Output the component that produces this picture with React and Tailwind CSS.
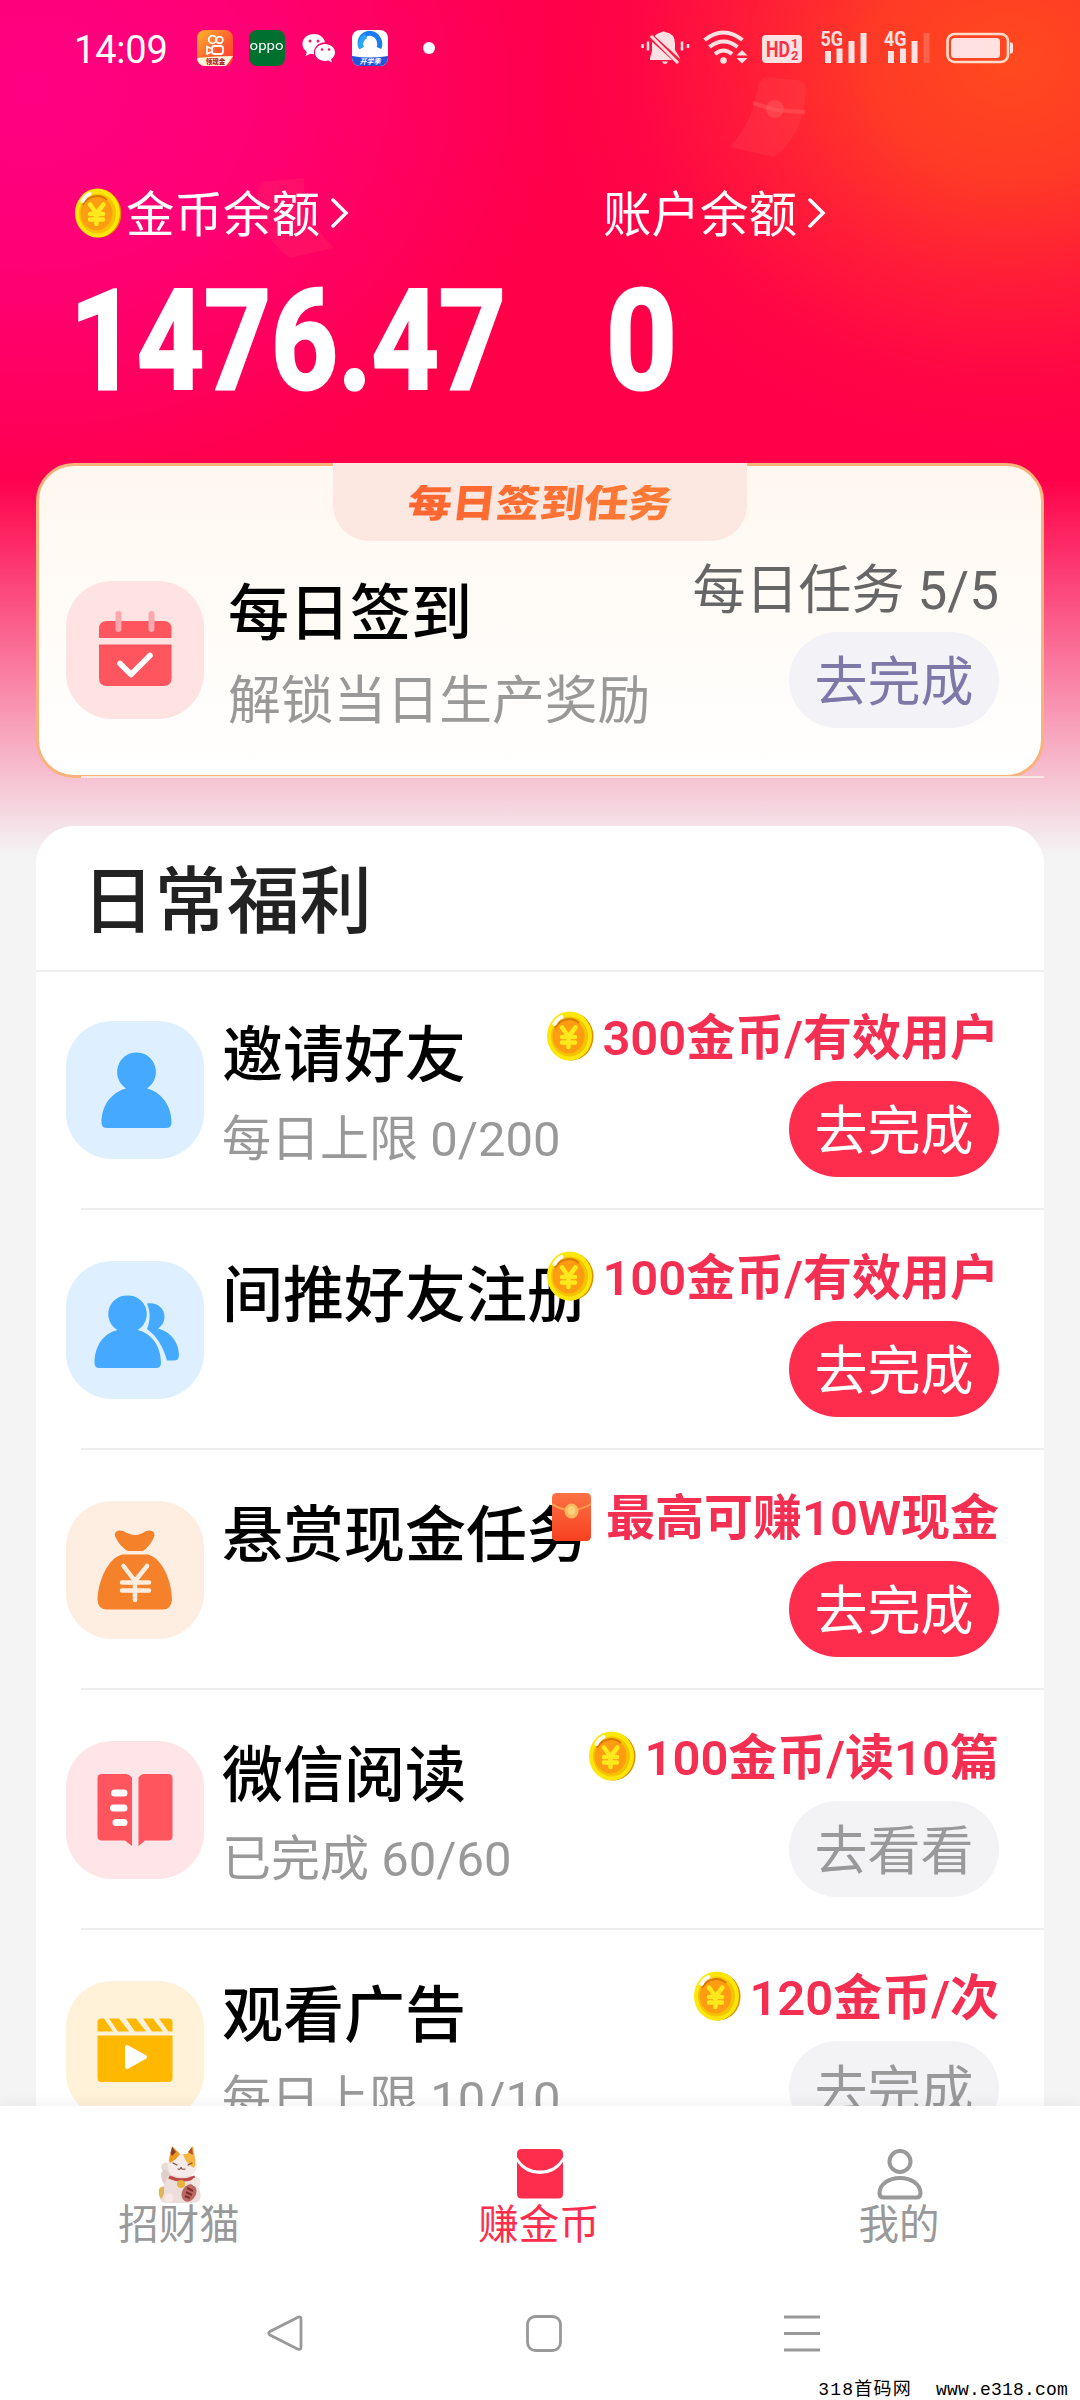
import React from 'react';

function Coin({ className }) {
    return (
        <svg viewBox="0 0 48 50" className={className}>
            <ellipse cx="25" cy="25.5" rx="22.5" ry="24" fill="#e08a00" />
            <ellipse cx="23.5" cy="25" rx="22.5" ry="24.5" fill="#ffe60a" />
            <ellipse cx="23.5" cy="25.5" rx="18.5" ry="20" fill="#f5c400" />
            <ellipse cx="22.5" cy="25" rx="16" ry="17.5" fill="#ff9c12" />
            <path d="M9 17A16 17.5 0 0 1 33 12" fill="none" stroke="#d97a00" strokeWidth="2" />
            <path d="M16 16.5l6.5 9 7-9M22.5 25.5V36M16 26h13M16 31.5h13" fill="none" stroke="#ffe81c" strokeWidth="4.500" strokeLinecap="round" strokeLinejoin="round" />
            <path d="M8.500 13q3-5.500 7-7" fill="none" stroke="#fff" strokeWidth="4" strokeLinecap="round" />
        </svg>
    );
}

function RedPacket({ className }) {
    return (
        <svg viewBox="0 0 40 48" className={className}>
            <defs>
                <linearGradient id="packet" x1="0" y1="0" x2="0" y2="1">
                    <stop offset="0" stopColor="#fb7245" />
                    <stop offset="1" stopColor="#f8401f" />
                </linearGradient>
            </defs>
            <rect width="39" height="48" rx="4.500" fill="url(#packet)" />
            <path d="M0 11q19 12 39 0" fill="none" stroke="#f9a04c" strokeWidth="2" />
            <ellipse cx="19.500" cy="18" rx="7" ry="7.500" fill="#f9b65c" />
            <ellipse cx="19.500" cy="17.500" rx="4" ry="4.500" fill="#fbd07c" />
        </svg>
    );
}

function CalendarIcon() {
    return (
        <>
            <path d="M33 57v-9q0-8 8-8h56.500q8 0 8 8v9zM33 63.500h72.500V97q0 8-8 8H41q-8 0-8-8z" fill="#ff555e" />
            <path d="M52.500 33v15M85.500 33v15" stroke="#ffa7ae" strokeWidth="6" strokeLinecap="round" />
            <path d="M54 82.500l11 11L84 74.500" fill="none" stroke="#fff" strokeWidth="5.500" strokeLinecap="round" strokeLinejoin="round" />
        </>
    );
}

function UserIcon() {
    return (
        <path d="M70.500 31.500a19 19.500 0 0 1 10.500 36C95 71 105.500 84 105.500 101.500q0 5.500-5.500 5.500H41q-5.500 0-5.500-5.500C35.500 84 46 71 60 67.500a19 19.500 0 0 1 10.500-36z" fill="#45aaff" />
    );
}

function UsersIcon() {
    return (
        <g fill="#45aaff">
            <path d="M61.500 34.500a18.500 18.500 0 0 1 10 34.500C85 72 95 84.500 95 102q0 5-5 5H33.500q-5 0-5-5C28.500 84.500 38 72 51.500 69a18.500 18.500 0 0 1 10-34.500z" />
            <path d="M81 42.500c9.500-2 17.500 4.500 17.500 13 0 5.500-2.500 9.500-6.500 12C104 70.500 113 81 113 94q0 5.500-5 5.500h-7C97 85 91 75.500 81 68c3.500-9 3.500-17 0-25.500z" />
        </g>
    );
}

function MoneyBagIcon() {
    return (
        <>
            <path d="M50 37c-3.500-6 2-9.500 8-6.500 4 2 7 3.500 11 3.500s7-1.500 10-3.500c6-3 12 .5 8.500 6.500-2 5-5.500 9-9 12-1 1-3 1-4 1H64c-1 0-3 0-4-1-4-3-8-7-10-12zM56 53.500h26C96 57 106 80 106 99q-1 9.500-9 9.500H41q-9 0-9.500-9.500C32 80 42 57 56 53.500z" fill="#f5812a" />
            <path d="M57.500 65L69 80l12-15M69 80v19M56 81.500h27M56 89.500h27" fill="none" stroke="#ffeee0" strokeWidth="4.500" strokeLinecap="round" />
        </>
    );
}

function BookIcon() {
    return (
        <>
            <path d="M36 33h24q3 0 6 3.500V105l-7-5.500H36q-4.500 0-4.500-4V37q0-4 4.500-4zM78 33h24q4.500 0 4.500 4v58.500q0 4-4.500 4H79l-6.500 5.500V36.500q2.500-3.500 5.500-3.500z" fill="#ff555e" />
            <path d="M48.500 52h9.500M47.500 67H58M50 81.500h8" stroke="#fff" strokeWidth="7" strokeLinecap="round" />
        </>
    );
}

function ClapperIcon() {
    return (
        <>
            <path d="M31.500 50.500V41q0-3.500 3.500-3.500h3l9 13zM43 37.500h10l10 13H52zM60 37.500h10l10 13H69zM77 37.500h10l10 13H86zM93 37.500h10q3.500 0 3.500 3.500v9.500h-4zM31.500 54.500h75V97q0 4-4 4h-67q-4 0-4-4z" fill="#ffb800" />
            <path d="M61 66l18 10-18 10z" fill="#fff" stroke="#fff" strokeWidth="4" strokeLinejoin="round" />
        </>
    );
}

function Tile({ bg, children }) {
    return (
        <div className={`h-[138px] w-[138px] shrink-0 rounded-[46px] ${bg}`}>
            <svg viewBox="0 0 138 138" className="h-full w-full">{children}</svg>
        </div>
    );
}

function ActionButton({ tone, children }) {
    return (
        <button className={`flex h-24 w-[210px] items-center justify-center rounded-full text-[53px] leading-none ${tone}`}>
            <span className="mt-[6px]">{children}</span>
        </button>
    );
}

const primary = 'bg-[#fe2c4d] text-white';
const muted = 'bg-[#f3f3f6] text-[#999]';

const tasks = [
    { title: '邀请好友', sub: '每日上限 0/200', reward: '300金币/有效用户', action: '去完成', tone: primary, bg: 'bg-[#def0ff]', Icon: UserIcon },
    { title: '间推好友注册', reward: '100金币/有效用户', action: '去完成', tone: primary, bg: 'bg-[#def0ff]', Icon: UsersIcon },
    { title: '悬赏现金任务', reward: '最高可赚10W现金', packet: true, action: '去完成', tone: primary, bg: 'bg-[#feeee1]', Icon: MoneyBagIcon },
    { title: '微信阅读', sub: '已完成 60/60', reward: '100金币/读10篇', action: '去看看', tone: muted, bg: 'bg-[#ffe5e7]', Icon: BookIcon },
    { title: '观看广告', sub: '每日上限 10/10', reward: '120金币/次', action: '去完成', tone: muted, bg: 'bg-[#fff2d8]', Icon: ClapperIcon },
];

function TaskRow({ task, first }) {
    return (
        <div className="relative flex h-[240px] pr-[45px] pl-[30px]">
            <div className={`absolute right-0 h-0.5 bg-[#eee] ${first ? 'top-0 left-0' : '-top-0.5 left-[45px]'}`} />
            <div className="pt-[51px]">
                <Tile bg={task.bg}><task.Icon /></Tile>
            </div>
            <div className="ml-[18px] w-0 grow pt-[56px] whitespace-nowrap">
                <div className="h-[60px] text-[61px] leading-[60px] font-medium text-black">{task.title}</div>
                <div className="mt-[30px] h-12 text-[49px] leading-[48px] text-[#999]">{task.sub}</div>
            </div>
            <div className="relative flex flex-col items-end pt-[44px]">
                <div className="flex h-12 items-center text-[49px] leading-[48px] font-semibold whitespace-nowrap text-[#f52f52]">
                    {task.packet
                        ? <RedPacket className="-mt-0.5 mr-3.5 h-12 w-10" />
                        : <Coin className="-mt-1 mr-2 h-[50px] w-12" />}
                    <span className="mt-[2px]">{task.reward}</span>
                </div>
                <div className="mt-[19px]">
                    <ActionButton tone={task.tone}>{task.action}</ActionButton>
                </div>
            </div>
        </div>
    );
}

function AppIcons() {
    return (
        <div className="ml-[30px] flex items-center">
            {/* Kuaishou */}
            <svg viewBox="0 0 36 36" className="h-9 w-9">
                <defs>
                    <linearGradient id="ks" x1="0" y1="0" x2="1" y2="1">
                        <stop offset="0" stopColor="#ffb52e" />
                        <stop offset=".6" stopColor="#ff5a30" />
                        <stop offset="1" stopColor="#ff3b30" />
                    </linearGradient>
                    <clipPath id="round"><rect width="36" height="36" rx="8" /></clipPath>
                </defs>
                <g clipPath="url(#round)">
                    <rect width="36" height="36" fill="url(#ks)" />
                    <path d="M0 28q18-2 36-2-3 5-7 10H0z" fill="#fff3d6" />
                </g>
                <g fill="none" stroke="#fff" strokeWidth="1.800">
                    <circle cx="15.500" cy="9.500" r="3.800" />
                    <circle cx="22.500" cy="10" r="3.300" />
                    <rect x="15" y="16" width="11" height="8" rx="2.500" />
                    <path d="M14 18.500l-4-2v7.500l4-2" strokeLinejoin="round" />
                </g>
                <text x="18.500" y="34" fontSize="6.500" fontWeight="900" textAnchor="middle" fill="#b3241a">领现金</text>
            </svg>
            <div className="ml-4 flex h-9 w-9 items-center justify-center rounded-[8px] bg-[#00702f]">
                <span className="-mt-1 scale-x-125 text-[12px] leading-none text-white">oppo</span>
            </div>
            {/* WeChat */}
            <svg viewBox="0 0 34 30" className="ml-[17px] h-[30px] w-[34px]">
                <path d="M12 1C5.500 1 .5 5.300.5 11c0 3.300 1.700 6 4.300 7.900L3.700 23l4.500-2.300c1.200.3 2.500.5 3.800.5-1-7 4.500-12 11-12C22 4.500 17.500 1 12 1z" fill="#fff" />
                <path d="M23 11c-5.700 0-10 3.800-10 8.500S17.300 28 23 28c1.200 0 2.300-.2 3.400-.5L30 29.500l-1-3.300c2.500-1.600 4-4 4-6.700 0-4.700-4.300-8.500-10-8.500z" fill="#fff" />
                <g fill="#f0186c">
                    <circle cx="8" cy="8" r="1.500" />
                    <circle cx="16" cy="8" r="1.500" />
                    <circle cx="20" cy="16.500" r="1.300" />
                    <circle cx="27" cy="16.500" r="1.300" />
                </g>
            </svg>
            {/* QQ browser */}
            <svg viewBox="0 0 36 36" className="ml-4 h-9 w-9">
                <g clipPath="url(#round)">
                    <rect width="36" height="36" fill="#fff" />
                    <path d="M0 26q18 3 36 0v10H0z" fill="#2456d8" />
                </g>
                <path d="M9.500 18A9 9 0 0 1 26 8q3 5 1 10" fill="none" stroke="#1b7cf2" strokeWidth="5" />
                <path d="M9.500 18A9 9 0 0 1 14 6" fill="none" stroke="#29a5fb" strokeWidth="5" />
                <text x="18" y="34" fontSize="7" fontWeight="700" fontStyle="italic" textAnchor="middle" fill="#fff">开学季</text>
            </svg>
            <div className="ml-[35px] h-3 w-3 rounded-full bg-white" />
        </div>
    );
}

function StatusIcons() {
    return (
        <svg viewBox="0 0 400 60" className="mt-1 mr-[50px] ml-auto h-[60px] w-[400px]" fill="#ffe1e1">
            {/* muted bell */}
            <g>
                <path d="M35 12q10 1 10 12v6l5 8v2H20v-2l2-7v-8q0-6 5-9 2-1 5-2 1-1.500 3 0zM32 41.500h6q-1 2.500-3 2.500t-3-2.500z" />
                <path d="M19 15l31 28" stroke="#fe1b42" strokeWidth="6" />
                <path d="M21 16l27 27" stroke="#ffe1e1" strokeWidth="3" />
                <path d="M12.500 24v4M18 21.500v9M52 21.500v9M58 24v4" stroke="#ffe1e1" strokeWidth="2.500" />
            </g>
            {/* wifi */}
            <g fill="none" stroke="#ffe1e1" strokeWidth="4">
                <path d="M74.500 20q19-15 38 0M79.500 27q14-11 28 0M85 34q8.500-7 17 0" />
            </g>
            <circle cx="93.500" cy="40.500" r="3.300" />
            <path d="M112 30l5.500 5.500h-11zM112 43.500l5.500-5.500h-11z" />
            {/* HD */}
            <rect x="132" y="15" width="40" height="28" rx="4" />
            <g fill="#f9324a" fontFamily="Roboto, sans-serif" fontWeight="700">
                <text x="136" y="37" fontSize="22" textLength="24" lengthAdjust="spacingAndGlyphs">HD</text>
                <text x="161" y="28" fontSize="13">1</text>
                <text x="161" y="40" fontSize="13">2</text>
            </g>
            {/* signals */}
            <g fontFamily="Roboto, sans-serif" fontWeight="700" fontSize="21">
                <text x="190.500" y="26" textLength="22.500" lengthAdjust="spacingAndGlyphs">5G</text>
                <text x="254" y="26" textLength="22.500" lengthAdjust="spacingAndGlyphs">4G</text>
            </g>
            <path d="M195 31h6v12h-6zM206.500 28.500h6V43h-6zM218.500 21h6v22h-6zM230.500 13h6v30h-6z" />
            <path d="M258 31h6v12h-6zM270 28.500h6V43h-6zM281.500 21h6v22h-6z" />
            <path d="M293.500 13h6v30h-6z" fillOpacity=".22" />
            {/* battery */}
            <rect x="317.500" y="14" width="60.500" height="28" rx="7" fill="none" stroke="#ffdccb" strokeWidth="2.600" />
            <rect x="321" y="18" width="49" height="20" rx="3.500" />
            <path d="M380 22.500h1q2 0 2 2v7q0 2-2 2h-1z" />
        </svg>
    );
}

function Balance({ label, value, coin }) {
    return (
        <div>
            <div className="flex h-12 items-center text-[48.500px] leading-[48px] text-white">
                {coin && <Coin className="mr-1 h-[50px] w-12" />}
                <span className="mt-[5px]">{label}</span>
                <svg viewBox="0 0 18 32" className="ml-[11px] h-8 w-[18px]">
                    <path d="M2 3l13 13L2 29" fill="none" stroke="#fff" strokeWidth="3.500" strokeLinecap="round" />
                </svg>
            </div>
            <div className={`mt-[54px] h-[102px] origin-left text-[139px] leading-[102px] font-bold text-white [-webkit-text-stroke:3px_white] ${coin ? '-ml-1 scale-x-[0.84]' : 'ml-[3px] scale-x-[0.89]'}`}>
                {value}
            </div>
        </div>
    );
}

function CatIcon() {
    return (
        <svg viewBox="0 0 44 58" className="h-[58px] w-11">
            <path d="M7 30q-5-6-3-11 4-3 7 0l3 13z" fill="#e9d9d8" />
            <path d="M3 28q0 10 5 12l5-6q-2-8-6-10z" fill="#dfcfcb" />
            <path d="M2 54q-2-10 4-14l5-10h22l7 12q5 8 1 14-3 2-8 2H8q-4 0-6-4z" fill="#ecdedc" />
            <path d="M1 44q2-3 5-2 1 8-3 12-3-4-2-10z" fill="#e3b457" />
            <path d="M11 14L14 1l8 8h7l6-8 3 15q3 10-5 14-11 4-20-1-6-6-2-15z" fill="#f5ece9" />
            <path d="M11 15L14 1l8 8q-3 5-10 9z" fill="#f0991e" />
            <path d="M12.500 8l1.700-6 3.800 5-4 4z" fill="#8d3e32" />
            <path d="M25 9h4l6-8 2 12q1 7-1 10-8-4-11-14z" fill="#f7b541" />
            <path d="M30 7l4-5 1 8z" fill="#b65327" />
            <path d="M15 18l4 2M30 20l4-2M20 24q2.500 1 3-2 .5 3 4 2" fill="none" stroke="#7f4840" strokeWidth="1.200" strokeLinecap="round" />
            <path d="M11 32q13 6 26 0" fill="none" stroke="#c24848" strokeWidth="3.500" />
            <circle cx="23" cy="39" r="4" fill="#e9b23c" />
            <ellipse cx="31" cy="48" rx="7" ry="9" transform="rotate(28 31 48)" fill="#b96a65" />
            <path d="M29 43l6 3M28 47l6 3M27 51l5 2" stroke="#7d2b2b" strokeWidth="2" />
            <circle cx="11" cy="53" r="4.500" fill="#f9e9e6" />
            <circle cx="38" cy="37" r="4.500" fill="#f3e7e4" />
        </svg>
    );
}

function NavTab({ label, color, children }) {
    return (
        <div className={`flex flex-1 flex-col items-center pt-[38px] ${color}`}>
            <div className="flex h-[60px] items-center">{children}</div>
            <div className="mt-px -ml-0.5 h-10 text-[40.500px] leading-[40px]">{label}</div>
        </div>
    );
}

export default function App() {
    return (
        <div className="relative flex h-[2400px] w-[1080px] flex-col overflow-hidden bg-[#f4f4f5] font-[Roboto,'Noto_Sans_CJK_SC',sans-serif]">
            {/* Header backdrop, fades into the page grey */}
            <div className="absolute inset-x-0 top-0 h-[855px] bg-[linear-gradient(to_bottom,transparent_56%,#f4f4f5_100%),radial-gradient(ellipse_470px_400px_at_1010px_60px,#ff4a1e_0,rgba(255,64,34,0.9)_30%,rgba(255,48,44,0.6)_55%,rgba(255,24,60,0.25)_80%,rgba(255,0,72,0)_100%),radial-gradient(ellipse_540px_430px_at_30px_90px,#ff0083_0,#ff0076_40%,rgba(255,0,76,0)_100%),linear-gradient(#ff0049,#ff0049)]" />
            <svg viewBox="0 0 1080 300" className="absolute top-0 left-0 h-[300px] w-[1080px]">
                <g fill="#ff5a5e" fillOpacity=".2">
                    <path d="M765 77l32 3q9 2 9 10-2 45-32 67l-45-10q24-24 30-64z" />
                    <path d="M753 103l22 7 30 2" fill="none" stroke="#ff5a5e" strokeOpacity=".5" strokeWidth="4" />
                    <circle cx="775" cy="109" r="9" fillOpacity=".5" />
                </g>
                <path d="M262 182l42-4q-2 38 30 70l-44 10q-36-26-32-68z" fill="#ff4d66" fillOpacity=".18" />
            </svg>

            <div className="relative flex h-24 items-center pl-[74px]">
                <span className="mt-1 w-[93px] text-[38px] leading-none tracking-[-0.200px] text-white">14:09</span>
                <AppIcons />
                <StatusIcons />
            </div>

            <div className="relative flex h-[367px] pt-[93px] pl-[74px]">
                <div className="w-[529px]"><Balance label="金币余额" value="1476.47" coin /></div>
                <Balance label="账户余额" value="0" />
            </div>

            {/* Daily sign-in card */}
            <div className="relative mx-9 flex h-[315px] shrink-0 rounded-[38px] border-[3px] border-[#f8b27c] bg-linear-to-b from-[#fff8f0] to-white pr-[42px] pl-[27px]">
                <div className="absolute -top-[3px] left-[294px] flex h-[78px] w-[414px] justify-center rounded-b-[36px] bg-[#fce8e0] pt-[19px]">
                    <span className="h-11 -skew-x-6 scale-y-[0.88] bg-linear-to-r from-[#ff6430] to-[#ff7c36] bg-clip-text text-[44px] leading-[44px] font-black text-transparent">每日签到任务</span>
                </div>
                <div className="absolute -right-[3px] -bottom-[3px] left-[42px] h-0.5 bg-[#fbe8e4]" />
                <div className="pt-[115px]">
                    <Tile bg="bg-[#ffe2e2]"><CalendarIcon /></Tile>
                </div>
                <div className="ml-6 w-0 grow pt-[118px] whitespace-nowrap">
                    <div className="h-[60px] text-[61px] leading-[60px] font-medium text-black">每日签到</div>
                    <div className="mt-[31px] h-[52px] text-[52.800px] leading-[52px] text-[#999]">解锁当日生产奖励</div>
                </div>
                <div className="flex flex-col items-end pt-[99px]">
                    <div className="h-[52px] text-[53px] leading-[52px] whitespace-nowrap text-[#666]">每日任务 5/5</div>
                    <div className="mt-[15px]">
                        <ActionButton tone="bg-[#f3f3f7] text-[#7d78a8]">去完成</ActionButton>
                    </div>
                </div>
            </div>

            {/* Daily benefits */}
            <div className="relative mx-9 mt-12 h-[1280px] shrink-0 overflow-hidden rounded-t-[38px] bg-white">
                <div className="flex h-36 items-center pt-2.5 pl-[46px] text-[72.500px] leading-none font-medium text-[#222]">
                    <span>日常福利</span>
                </div>
                {tasks.map((task, i) => (
                    <TaskRow key={task.title} task={task} first={i === 0} />
                ))}
            </div>

            {/* Tab bar */}
            <div className="relative h-[294px] shrink-0 bg-white shadow-[0_-2px_14px_rgba(0,0,0,0.06)]">
                <div className="flex h-[182px]">
                    <NavTab label="招财猫" color="text-[#999]">
                        <CatIcon />
                    </NavTab>
                    <NavTab label="赚金币" color="text-[#fe2c4d]">
                        <svg viewBox="0 0 46 50" className="h-[50px] w-[46px]" fill="#fe2c4d">
                            <path d="M5 0h36q5 0 5 4.500V8Q38 21.500 23 21.500T0 8V4.500Q0 0 5 0z" />
                            <path d="M0 13q8 12 23 12t23-12v32q0 4.500-5 4.500H5q-5 0-5-4.500z" />
                        </svg>
                    </NavTab>
                    <NavTab label="我的" color="text-[#999]">
                        <svg viewBox="0 0 46 52" className="h-[52px] w-[46px]" fill="none" stroke="#999" strokeWidth="4">
                            <circle cx="23" cy="13.500" r="10.500" />
                            <path d="M2.500 45.500C2.500 36 12 30 23 30s20.500 6 20.500 15.500q0 4-4 4h-33q-4 0-4-4z" />
                        </svg>
                    </NavTab>
                </div>
                <div className="flex h-[74px] items-center pt-4 pl-[267px]">
                    <svg viewBox="0 0 36 37" className="h-[37px] w-9" fill="none" stroke="#999" strokeWidth="2.800">
                        <path d="M31 2.200q3-1 3 2v28q0 3-3 2L3 20q-2.500-1.800 0-3.500z" strokeLinejoin="round" />
                    </svg>
                    <svg viewBox="0 0 36 37" className="ml-[223px] h-[37px] w-9" fill="none" stroke="#999" strokeWidth="2.800">
                        <rect x="1.500" y="1.500" width="33" height="34" rx="8" />
                    </svg>
                    <svg viewBox="0 0 36 37" className="ml-[222px] h-[37px] w-9" stroke="#999" strokeWidth="3">
                        <path d="M0 2h36M0 18.500h36M0 35h36" />
                    </svg>
                </div>
                <div className="absolute right-3 bottom-0 flex items-end gap-6 font-['Liberation_Mono','Noto_Sans_CJK_SC',monospace] text-[18px] leading-[20px] text-black">
                    <span className="tracking-[1.200px]">318首码网</span>
                    <span className="tracking-[0.200px]">www.e318.com</span>
                </div>
            </div>
        </div>
    );
}
